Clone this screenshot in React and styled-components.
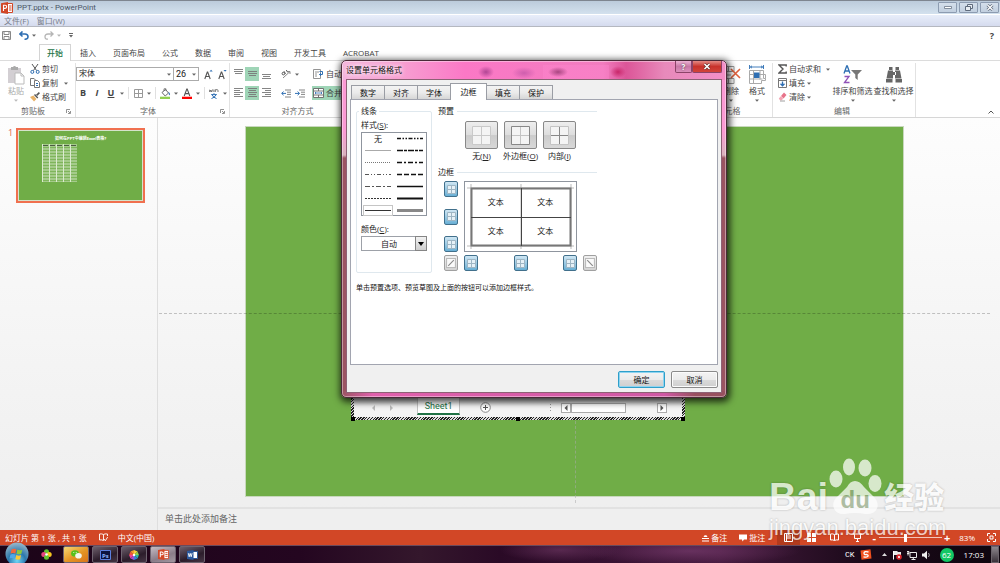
import React, { useState } from "react";
import styled, { createGlobalStyle, css } from "styled-components";

const GlobalStyle = createGlobalStyle`
  * {
    box-sizing: border-box;
  }
  body {
    margin: 0;
    overflow: hidden;
    font-family: "Open Sans", "Noto Sans CJK SC", sans-serif;
    font-size: 8px;
    line-height: 12px;
    color: #444;
  }
  button, select, input {
    font: inherit;
    color: inherit;
    margin: 0;
    padding: 0;
  }
  button {
    border: 0;
    background: none;
  }
  svg {
    display: block;
    flex: none;
  }
`;

const Screen = styled.div`
  position: relative;
  display: flex;
  flex-direction: column;
  min-height: 100vh;
  background: #fff;
`;

/* ---------- window chrome ---------- */

const TitleBar = styled.header`
  display: flex;
  align-items: center;
  gap: 4px;
  height: 14px;
  padding-left: 1px;
  border-top: 1px solid #7e8590;
  background: linear-gradient(#bccbdb, #d3e1ee);
  color: #4c5766;
`;

const TitleText = styled.h1`
  flex: 1;
  margin: 0;
  font-family: Roboto, sans-serif;
  font-size: 8px;
  font-weight: 400;
`;

const WindowButtons = styled.div`
  display: flex;
  gap: 2px;
  padding-right: 1px;
`;

const WindowButton = styled.button`
  display: flex;
  align-items: center;
  justify-content: center;
  width: 19px;
  height: 11px;
  border: 1px solid #8d9cb1;
  border-radius: 1px;
  background: linear-gradient(#d5dfeb, #c1cfdf);
`;

const MenuBar = styled.nav`
  display: flex;
  align-items: center;
  gap: 8px;
  height: 13px;
  padding-left: 4px;
  border-top: 1px solid #fff;
  border-bottom: 1px solid #b5b8c0;
  background: linear-gradient(#e8eefa, #d5dbee);
  color: #777c88;
`;

const QuickBar = styled.div`
  display: flex;
  align-items: center;
  height: 17px;
  padding: 0 6px 0 2px;
  gap: 8px;

  span {
    display: flex;
    align-items: center;
    gap: 3px;
  }
`;

const HelpButton = styled.button`
  margin-left: auto;
  font-size: 9px;
  font-weight: 700;
`;

/* ---------- ribbon ---------- */

const TabStrip = styled.div`
  display: flex;
  height: 17px;
  padding-left: 39px;
  border-bottom: 1px solid #dcdcdc;
`;

const RibbonTab = styled.button`
  height: 17px;
  padding: 0 7px;
  margin-right: 1px;
  white-space: nowrap;
  border: 1px solid transparent;
  border-bottom: 0;
  ${(props) =>
    props.$active &&
    css`
      color: #217346;
      font-weight: 500;
      border-color: #d4d4d4;
      background: #fff;
    `}
`;

const Ribbon = styled.div`
  display: flex;
  height: 57px;
  border-bottom: 1px solid #d6d6d6;
`;

const Group = styled.section`
  display: flex;
  flex-direction: column;
  flex: none;
  width: ${(props) => props.$width};
  margin-top: 2px;
  border-right: 1px solid #e2e2e2;
`;

const GroupBody = styled.div`
  display: flex;
  flex: 1;
  padding: ${(props) => props.$pad || "0"};
  justify-content: ${(props) => props.$justify || "flex-start"};
`;

const GroupLabel = styled.div`
  display: flex;
  align-items: center;
  height: 12px;
  padding-right: 4px;
  color: #666;

  span {
    flex: 1;
    text-align: center;
  }
`;

const BigButton = styled.button`
  display: flex;
  flex-direction: column;
  align-items: center;
  justify-content: flex-start;
  width: ${(props) => props.$width || "26px"};
  height: 40px;
  padding-top: 2px;
  white-space: nowrap;
  color: ${(props) => (props.disabled ? "#aaa" : "inherit")};

  span {
    height: 14px;
  }
`;

const CommandList = styled.div`
  display: flex;
  flex-direction: column;
  gap: 2px;
`;

const Command = styled.button`
  display: flex;
  align-items: center;
  gap: 2px;
  height: 12px;
  white-space: nowrap;
`;

const Spacer = styled.i`
  width: ${(props) => props.$width};
  flex: ${(props) => (props.$grow ? 1 : "none")};
`;

const ToolStack = styled.div`
  display: flex;
  flex-direction: column;
  gap: 5px;
`;

const ToolRow = styled.div`
  display: flex;
  align-items: center;
  height: 14px;
`;

const Tool = styled.button`
  display: flex;
  align-items: center;
  justify-content: center;
  width: ${(props) => props.$width || "14px"};
  height: 14px;
  background: ${(props) => (props.$on ? "#9fd5b7" : "none")};
  font-size: 9px;
  font-weight: 700;
`;

const WideTool = styled.button`
  display: flex;
  align-items: center;
  gap: 2px;
  height: 14px;
  padding-left: 1px;
  white-space: nowrap;
  background: ${(props) => (props.$on ? "#9fd5b7" : "none")};
`;

const Rule = styled.i`
  width: 1px;
  height: 12px;
  margin: 0 2px;
  background: #e0e0e0;
`;

const Combo = styled.div`
  position: relative;
  width: ${(props) => props.$width};
  margin-right: -1px;

  select {
    appearance: none;
    width: 100%;
    height: 14px;
    padding-left: 2px;
    border: 1px solid #ababab;
    border-radius: 0;
    background: #fff;
    color: #222;
    font-family: Roboto, "Noto Sans CJK SC", sans-serif;
    font-size: ${(props) => props.$size || "8px"};
  }

  svg {
    position: absolute;
    right: 3px;
    top: 6px;
    pointer-events: none;
  }
`;

const RibbonEnd = styled.div`
  display: flex;
  align-items: flex-end;
  justify-content: flex-end;
  width: 84px;
  padding: 0 6px 3px 0;
`;

/* ---------- work area ---------- */

const Work = styled.main`
  display: flex;
  flex: 1;
  background: linear-gradient(#fdfdfd, #eeeeee);
`;

const ThumbPane = styled.aside`
  display: flex;
  align-items: flex-start;
  gap: 3px;
  width: 158px;
  padding: 10px 0 0 8px;
  border-right: 1px solid #dedede;
  color: #e2664a;
  font-size: 9px;
  line-height: 10px;
`;

const Thumb = styled.div`
  width: 129px;
  height: 75px;
  padding-top: 6px;
  border: 2px solid #f0704f;
  outline: 1px solid #d5e3cb;
  outline-offset: -3px;
  background: #70ad47;
  color: #fff;
  font-size: 4px;
  font-weight: 700;
  line-height: 6px;
  text-align: center;
  font-family: Roboto, "Noto Sans CJK SC", sans-serif;

  svg {
    margin: 2px 0 0 24px;
  }
`;

const Editor = styled.div`
  display: flex;
  flex-direction: column;
  flex: 1;
`;

const Canvas = styled.div`
  position: relative;
  display: flex;
  flex: 1;
  padding: 8px 96px 10px 87px;

  &::before {
    content: "";
    position: absolute;
    z-index: 1;
    left: 1px;
    right: 10px;
    top: 50%;
    border-top: 1px dashed #00000038;
  }

  &::after {
    content: "";
    position: absolute;
    left: 417px;
    bottom: 4px;
    height: 82px;
    border-left: 1px dashed #aaaaaa88;
  }
`;

const Slide = styled.div`
  position: relative;
  flex: 1;
  border: 1px solid #c8d8bd;
  background: #70ad47;
`;

const Notes = styled.div`
  height: 23px;
  padding: 4px 7px;
  border-top: 2px solid #e2e2e2;
  background: #efefef;
  color: #666;
  font-size: 9px;
`;

/* embedded workbook, edited in place */
const Workbook = styled.div`
  position: absolute;
  left: 105px;
  bottom: 76px;
  display: flex;
  flex-direction: column;
  justify-content: flex-end;
  width: 334px;
  height: 44px;
  padding: 0 3px 3px;
  background: repeating-linear-gradient(135deg, #222 0 1px, #ddd 1px 2px);
`;

const Handle = styled.i`
  position: absolute;
  bottom: -1px;
  left: ${(props) => props.$left};
  width: 4px;
  height: 4px;
  margin-left: -2px;
  background: #000;
`;

const SheetBar = styled.div`
  display: flex;
  align-items: center;
  height: 20px;
  padding: 0 15px 0 18px;
  border-top: 1px solid #777;
  background: linear-gradient(#c9c9c9, #f4f4f4 8px);
`;

const SheetTab = styled.button`
  width: 44px;
  height: 17px;
  margin: 0 20px 2px 23px;
  border: 1px solid #c4c4c4;
  border-top: 0;
  border-bottom: 2px solid #217346;
  background: #fff;
  color: #217346;
  font-family: Roboto, sans-serif;
  font-size: 9px;
`;

const ScrollArrow = styled.button`
  display: flex;
  align-items: center;
  justify-content: center;
  width: 10px;
  height: 10px;
  border: 1px solid #ababab;
  background: #fff;
`;

const ScrollTrack = styled.div`
  display: flex;
  width: 108px;
  justify-content: space-between;

  i {
    width: 55px;
    height: 10px;
    margin: 0 auto 0 0;
    border: 1px solid #ababab;
    background: #fff;
  }
`;

/* ---------- format cells dialog ---------- */

const Dialog = styled.section`
  position: absolute;
  z-index: 2;
  left: 341px;
  top: 60px;
  display: flex;
  flex-direction: column;
  width: 386px;
  height: 338px;
  padding: 0 4px 4px;
  border: 1px solid #4a2a38;
  border-radius: 5px;
  background:
    radial-gradient(8px 6px at 144px 11px, #8d2c7caa, transparent),
    radial-gradient(12px 6px at 182px 12px, #c457a8cc, transparent),
    radial-gradient(10px 5px at 216px 11px, #8c3068bb, transparent),
    radial-gradient(8px 6px at 276px 11px, #c2185bcc, transparent),
    linear-gradient(#ff86cf66, #ff86cf66) 201px 4px / 66px 15px no-repeat,
    linear-gradient(90deg, #f4b4dc, #f7a0d2 15%, #fb78c6 32%, #f27cbf 68%, #dc5598 74%, #e88abb 84%, #f48fc8 100%) 0 0 / 100% 19px no-repeat,
    linear-gradient(90deg, #9b5462, #e060ac 8%, #cf58a4 84%, #98505f 92%) 0 100% / 100% 6px no-repeat,
    linear-gradient(#fb9ad4 70px, #d9b3bd 94px, #9b5462 97px);
  box-shadow: inset 0 0 0 1px #ffffff66, 1px 2px 7px 2px #000000bb;
  color: #222;
`;

const DialogTitle = styled.header`
  display: flex;
  align-items: flex-start;
  height: 18px;
  color: #111;

  h2 {
    flex: 1;
    margin: 3px 0 0;
    font-size: 8px;
    font-weight: 400;
    text-shadow: 0 0 5px #fff, 0 0 5px #fff;
  }
`;

const CaptionButton = styled.button`
  display: flex;
  align-items: center;
  justify-content: center;
  width: ${(props) => (props.$close ? "30px" : "17px")};
  height: 12px;
  border: 1px solid #8c4468;
  border-top: 0;
  border-radius: 0 0 2px 2px;
  background: ${(props) =>
    props.$close
      ? "linear-gradient(#e58a84, #c8322b 50%, #d2443a)"
      : "linear-gradient(#eeb2d4, #c878a6 50%, #dc90bc)"};
  color: #fff;
  font-weight: 700;
  line-height: 9px;
  text-shadow: 0 0 2px #333;
`;

const DialogBody = styled.div`
  display: flex;
  flex-direction: column;
  flex: 1;
  padding: 4px 3px;
  border: 1px solid #8d6175;
  background: #f0f0f0;
`;

const DialogTabs = styled.div`
  display: flex;
  align-items: flex-end;
  height: 15px;
  padding-left: 1px;
`;

const DialogTab = styled.button`
  width: 34px;
  height: ${(props) => (props.$active ? "17px" : "14px")};
  margin: 0 -1px ${(props) => (props.$active ? "-1px" : "0")} 0;
  z-index: ${(props) => (props.$active ? 1 : 0)};
  border: 1px solid #9a9da4;
  border-bottom: 0;
  background: ${(props) =>
    props.$active ? "#fff" : "linear-gradient(#f3f3f3, #ebebeb 50%, #d6d6d6)"};
  color: #111;

  ${(props) =>
    props.$active &&
    css`
      width: 37px;
    `}
`;

const DialogPanel = styled.div`
  display: flex;
  flex-direction: column;
  flex: 1;
  gap: 9px;
  padding: 5px;
  border: 1px solid #a2a5b0;
  background: #fff;
`;

const PanelColumns = styled.div`
  display: flex;
  gap: 6px;
`;

const LineBox = styled.fieldset`
  width: 76px;
  height: 168px;
  margin: 0;
  padding: 0 4px;
  border: 1px solid #dfe8ee;
  border-radius: 2px;

  legend {
    padding: 0 2px;
    margin-left: -2px;
  }
`;

const FieldLabel = styled.label`
  display: block;
  margin-top: ${(props) => props.$top || "2px"};
`;

const StyleList = styled.div`
  display: grid;
  grid-template-columns: 1fr 1fr;
  grid-auto-rows: 12px;
  width: 66px;
  height: 84px;
  margin-top: 1px;
  border: 1px solid #8f959e;
`;

const StyleItem = styled.button`
  display: flex;
  align-items: center;
  justify-content: center;
  height: 11px;
  margin: 0 1px;
  border: ${(props) => (props.$selected ? "1px solid #c5c5c5" : "0")};
`;

const ColorField = styled.div`
  position: relative;
  display: flex;
  width: 66px;
  height: 15px;
  margin-top: 1px;

  select {
    appearance: none;
    width: 100%;
    padding-left: 19px;
    border: 1px solid #9da1a8;
    border-radius: 0;
    background: #fff;
  }

  span {
    position: absolute;
    right: 0;
    top: 0;
    display: flex;
    align-items: center;
    justify-content: center;
    width: 12px;
    height: 15px;
    border: 1px solid #858585;
    background: linear-gradient(#f2f2f2, #cfcfcf);
    pointer-events: none;
  }
`;

const BorderSide = styled.div`
  width: 159px;
`;

const SectionTitle = styled.h3`
  display: flex;
  align-items: center;
  gap: 3px;
  margin: 0;
  font-size: 8px;
  font-weight: 400;

  &::after {
    content: "";
    flex: 1;
    height: 1px;
    background: #dfe8ee;
  }
`;

const Presets = styled.div`
  display: flex;
  gap: 6px;
  padding: 4px 0 4px 27px;
`;

const Preset = styled.button`
  display: flex;
  flex-direction: column;
  align-items: center;
  gap: 1px;
  width: 33px;
  white-space: nowrap;

  i {
    display: flex;
    align-items: center;
    justify-content: center;
    width: 33px;
    height: 28px;
    border: 1px solid #888;
    border-radius: 2px;
    background: linear-gradient(#eeeeee, #dddddd 50%, #cccccc 52%, #d8d8d8);
  }
`;

const BorderGrid = styled.div`
  display: grid;
  grid-template-columns: 14px 113px 14px;
  gap: 3px 6px;
  padding: 3px 0 0 6px;
`;

const SideButtons = styled.div`
  display: flex;
  flex-direction: ${(props) => (props.$row ? "row" : "column")};
  justify-content: space-between;
`;

const EdgeButton = styled.button`
  display: flex;
  align-items: center;
  justify-content: center;
  width: 14px;
  height: 16px;
  border: 1px solid ${(props) => (props.$on ? "#41708c" : "#a0a0a0")};
  border-radius: 2px;
  background: ${(props) =>
    props.$on
      ? "linear-gradient(#cfe6f3, #9ccbe5 50%, #68afd5)"
      : "linear-gradient(#f0f0f0, #d2d2d2)"};
`;

const Preview = styled.div`
  position: relative;
  grid-column: 2 / 4;
  width: 113px;
  height: 71px;
  padding: 6px;
  border: 1px solid #8f959e;

  svg {
    position: absolute;
    left: 0;
    top: 0;
  }
`;

const PreviewCells = styled.div`
  display: grid;
  grid-template-columns: 1fr 1fr;
  height: 57px;
  align-items: center;
  text-align: center;
`;

const Hint = styled.p`
  margin: 0;
  font-size: 7px;
  color: #111;
`;

const DialogActions = styled.footer`
  display: flex;
  justify-content: flex-end;
  gap: 6px;
  padding-top: 6px;
`;

const ActionButton = styled.button`
  width: 47px;
  height: 17px;
  border: 1px solid ${(props) => (props.$primary ? "#2e9fca" : "#8a8a8a")};
  border-radius: 2px;
  background: linear-gradient(#f3f3f3, #ebebeb 50%, #dadada 52%, #cfcfcf);
  box-shadow: inset 0 0 0 1px ${(props) => (props.$primary ? "#8fd4f0" : "#fbfbfb")};
  color: #111;
`;

/* ---------- bottom bars ---------- */

const StatusBar = styled.footer`
  display: flex;
  align-items: center;
  height: 15px;
  padding: 0 4px 0 5px;
  background: #d24726;
  color: #fff;
  white-space: nowrap;
`;

const StatusItem = styled.span`
  display: flex;
  align-items: center;
  gap: 2px;
  margin-right: ${(props) => props.$gap || "12px"};
`;

const StatusRight = styled.div`
  display: flex;
  align-items: center;
  margin-left: auto;
`;

const ViewButton = styled.button`
  display: flex;
  align-items: center;
  justify-content: center;
  width: 23px;
  height: 15px;
  background: ${(props) => (props.$on ? "#b23a1d" : "none")};
`;

const ZoomStep = styled.button`
  width: 10px;
  font-size: 11px;
  font-weight: 700;
`;

const ZoomRange = styled.input`
  appearance: none;
  width: 63px;
  height: 10px;
  background: linear-gradient(#f3c6ba, #f3c6ba) center / 100% 1px no-repeat;

  &::-webkit-slider-thumb {
    appearance: none;
    width: 3px;
    height: 8px;
    background: #fff;
  }
`;

const Taskbar = styled.nav`
  display: flex;
  align-items: center;
  gap: 3px;
  height: 18px;
  padding: 0 1px 0 5px;
  border-top: 1px solid #6b4a5c;
  background:
    radial-gradient(60px 12px at 560px 4px, #6b3560aa, transparent),
    radial-gradient(110px 14px at 690px 5px, #7a3d70aa, transparent),
    linear-gradient(90deg, #1c0418, #240620 30%, #34172c 42%, #2a0a26 50%, #451a3e 72%, #1c0a1a 86%, #0e050e);
  color: #fff;
`;

const StartOrb = styled.button`
  position: relative;
  top: -2px;
`;

const QuickLaunch = styled.button`
  margin: 0 8px 0 9px;
`;

const TaskButton = styled.button`
  display: flex;
  align-items: center;
  justify-content: center;
  width: 26px;
  height: 17px;
  border: 1px solid #6f6470;
  border-radius: 2px;
  background: ${(props) => props.$fill || "linear-gradient(160deg, #6d5f6c, #2c1d2b 60%, #453544)"};
`;

const Tray = styled.div`
  display: flex;
  align-items: center;
  margin-left: auto;
  gap: 5px;
  height: 17px;
`;

const ImeText = styled.span`
  font-family: "Liberation Mono", monospace;
  font-size: 8px;
`;

const BatteryBadge = styled.span`
  width: 14px;
  height: 14px;
  margin: 0 5px 0 4px;
  border-radius: 50%;
  background: #12c765;
  line-height: 14px;
  text-align: center;
`;

const ShowDesktop = styled.button`
  width: 8px;
  height: 17px;
  margin-left: 2px;
  border: 1px solid #6a626a;
  background: linear-gradient(#8d868d, #3a323a);
`;

/* ---------- watermark ---------- */

const Watermark = styled.div`
  position: absolute;
  z-index: 3;
  right: 53px;
  bottom: 22px;
  width: 178px;
  color: #fff;
  opacity: 0.72;
  font-family: "Liberation Sans", "Noto Sans CJK SC", sans-serif;
  text-shadow: 0 0 2px #00000066;
  pointer-events: none;
`;

const Brand = styled.div`
  display: flex;
  align-items: flex-end;
  height: 56px;
  font-size: 38px;
  font-weight: 700;
  line-height: 36px;

  b {
    font-size: 30px;
    line-height: 34px;
    white-space: nowrap;
  }
`;

const Paw = styled.span`
  position: relative;
  display: flex;
  justify-content: center;
  width: 54px;
  margin: 0 2px 0 0;

  em {
    position: absolute;
    bottom: 3px;
    color: #96ab86;
    font-size: 24px;
    font-style: normal;
    line-height: 24px;
    text-shadow: none;
  }
`;

const Address = styled.div`
  font-size: 22px;
  line-height: 26px;
`;

/* ---------- icons ---------- */

const Caret = ({ color = "#666" }) => (
  <svg width="4" height="3" viewBox="0 0 4 3">
    <path d="M0 0.5h4L2 2.7z" fill={color} />
  </svg>
);

const PptIcon = ({ size = 12 }) => (
  <svg width={size} height={size} viewBox="0 0 12 12">
    <path d="M6 1.5h5.5v9H6z" fill="#fff" stroke="#d24726" />
    <path d="M8 4h2.5M8 6h2.5M8 8h2.5" stroke="#d24726" />
    <path d="M0 1.2 7 0v12L0 10.8z" fill="#d24726" />
    <path d="M2.5 9V3.2h1.6a1.5 1.5 0 0 1 0 3.2H2.5" fill="none" stroke="#fff" strokeWidth="1.1" />
  </svg>
);

const PasteIcon = () => (
  <svg width="18" height="20" viewBox="0 0 18 20">
    <path d="M1 3h13v15H1z" fill="#d3cfd3" />
    <path d="M4 5V2h2a1.6 1.6 0 0 1 3 0h2v3z" fill="#aaa" />
    <path d="M8 8h6l3 3v8H8z" fill="#fff" stroke="#bbb" />
    <path d="M14 8v3h3" fill="none" stroke="#bbb" />
  </svg>
);

const CutIcon = () => (
  <svg width="10" height="10" viewBox="0 0 10 10" fill="none">
    <path d="m2 0 4.6 6.6M8 0 3.4 6.6" stroke="#555" />
    <circle cx="2.3" cy="7.9" r="1.5" stroke="#2f6fb3" />
    <circle cx="7.7" cy="7.9" r="1.5" stroke="#2f6fb3" />
  </svg>
);

const CopyIcon = () => (
  <svg width="10" height="10" viewBox="0 0 10 10" fill="#fff">
    <path d="M.5.5h3.6l1.4 1.6v5.4h-5z" stroke="#777" />
    <path d="M4.5 2.5h3l2 2v5h-5z" stroke="#777" />
    <path d="M6 5.5h2M6 7.5h2" stroke="#2f6fb3" />
  </svg>
);

const BrushIcon = () => (
  <svg width="10" height="10" viewBox="0 0 10 10">
    <path d="m0 5 3.5-1.5L6.5 7 4 9.5z" fill="#e8b36a" />
    <path d="m4 3 3.3 3.4 1-1L5 2z" fill="#555" />
    <path d="m6.6 3.4 2.8-2.8" stroke="#555" strokeWidth="1.6" />
  </svg>
);

const Launcher = () => (
  <svg width="5" height="5" viewBox="0 0 5 5" fill="none" stroke="#777">
    <path d="M.5 4V.5H4M2 2l2 2M4.5 2v2.5H2" strokeWidth=".8" />
  </svg>
);

const GrowFont = ({ down }) => (
  <svg width="9" height="11" viewBox="0 0 9 11" fill="none">
    <path d="m.8 10 2.5-7h.4l2.5 7M1.7 7.5h3.6" stroke="#555" strokeWidth="1.1" />
    <path d={down ? "M5.5 1h3.2L7.1 2.8z" : "M5.5 2.6h3.2L7.1.8z"} fill="#2f6fb3" />
  </svg>
);

const GridIcon = ({ size = 9, line = "#999", outer = line, inner = line, fill = "none" }) => (
  <svg width={size} height={size} viewBox={`0 0 ${size} ${size}`} fill={fill}>
    <path d={`M.5.5h${size - 1}v${size - 1}h-${size - 1}z`} stroke={outer} />
    <path d={`M${size / 2} 1v${size - 2}M1 ${size / 2}h${size - 2}`} stroke={inner} />
  </svg>
);

const BucketIcon = () => (
  <svg width="11" height="11" viewBox="0 0 11 11">
    <path d="m2 4.5 3.5-3 3 3.5-3.3 3z" fill="#fff" stroke="#666" />
    <path d="M4 3V.8h2V3" fill="none" stroke="#666" strokeWidth=".8" />
    <path d="M8.6 3.5q2 2 .9 4-1.3-1-.9-4" fill="#2f6fb3" />
    <path d="M0 8.7h10V11H0z" fill="#92d050" />
  </svg>
);

const FontColorIcon = () => (
  <svg width="10" height="11" viewBox="0 0 10 11">
    <path d="m2.2 8 2.6-7h.4l2.6 7M3.2 5.6h3.6" fill="none" stroke="#555" strokeWidth="1.1" />
    <path d="M0 8.7h10V11H0z" fill="#f00" />
  </svg>
);

const PinyinIcon = () => (
  <svg width="10" height="11" viewBox="0 0 10 11" fill="none">
    <path d="m0 1.5.9 2.5.9-2 .9 2 .8-2.5M4.9 1.5V4M6.3 4V1.7h2q.7 0 .7.8V4" stroke="#666" strokeWidth=".9" />
    <path d="M5 5.2v1M2.2 6.6h5.6M3 6.8q1.5 3 4.5 3.7M7 6.8q-1.5 3-4.5 3.7" stroke="#2f6fb3" />
  </svg>
);

const AlignIcon = ({ bars, top = 0 }) => (
  <svg width="9" height="10" viewBox="0 0 9 10" stroke="#777">
    {bars.map(([x1, x2], i) => (
      <path key={i} d={`M${x1} ${top + i * 2 + 0.5}H${x2}`} strokeWidth=".9" />
    ))}
  </svg>
);

const OrientIcon = () => (
  <svg width="10" height="10" viewBox="0 0 10 10" fill="none" stroke="#555">
    <path d="m2 9 7-6.5M9 5V2.5H6.5" stroke="#888" />
    <circle cx="2.4" cy="4.6" r="1.3" />
    <path d="m3 2.2 1.5 2.6M5.3 1l1.4 2.4" />
  </svg>
);

const IndentIcon = ({ right }) => (
  <svg width="10" height="9" viewBox="0 0 10 9" fill="none">
    <path d="M4 1h6M6 3.2h4M6 5.4h4M4 8h6" stroke="#777" strokeWidth=".9" />
    <path d={right ? "M0 4.4h4M2.6 2.6l2 1.8-2 1.8" : "M5 4.4H1M2.6 2.6.6 4.4l2 1.8"} stroke="#2f6fb3" />
  </svg>
);

const WrapIcon = () => (
  <svg width="11" height="10" viewBox="0 0 11 10" fill="none">
    <path d="M.5.5h7v9h-7zM2 3h4M2 5h2M2 7h2" stroke="#888" strokeWidth=".9" />
    <path d="M6.5 2.5h3v3h-3M8 4 6.5 5.5 8 7" stroke="#2f6fb3" />
  </svg>
);

const MergeIcon = () => (
  <svg width="11" height="10" viewBox="0 0 11 10" fill="#fff">
    <path d="M.5.5h10v9H.5zM.5 3h10M.5 7h10M5.5.5V3M5.5 7v2.5" stroke="#666" strokeWidth=".9" />
    <path d="M2 5h7M3 4 2 5l1 1M8 4l1 1-1 1" fill="none" stroke="#2f6fb3" strokeWidth=".8" />
  </svg>
);

const DeleteCellsIcon = () => (
  <svg width="19" height="20" viewBox="0 0 19 20" fill="none">
    <path d="M1 1.5h11v5H1zM1 13.5h11v5H1zM6.5 1.5v5M6.5 13.5v5M1 10h8" stroke="#999" />
    <path d="m9 4 9 9M18 4l-9 9" stroke="#e0603c" strokeWidth="1.6" />
  </svg>
);

const FormatCellsIcon = () => (
  <svg width="18" height="20" viewBox="0 0 18 20" fill="none">
    <path d="M2 2h14M1.5 0v4M15.5 0v4M4 .8 2.5 2 4 3.2M13 .8 14.500 2 13 3.2" stroke="#2f6fb3" strokeWidth=".9" />
    <path d="M1.500 5.500h14v8h2v2h-4v3H1.500zM1.500 9.500h16v4M1.500 14h13M5.500 5.500v13M12 5.500v9" stroke="#aaa" />
    <path d="M6 7.500h5.500V13H6z" fill="#2f6fb3" />
  </svg>
);

const SigmaIcon = () => (
  <svg width="9" height="10" viewBox="0 0 9 10">
    <path d="M8.200 2.400V1H1l4 4-4 4h7.200V7.400" fill="none" stroke="#555" strokeWidth="1.400" />
  </svg>
);

const FillIcon = () => (
  <svg width="9" height="10" viewBox="0 0 9 10">
    <path d="M.5.5h8v9h-8zM.5 2.500h8" fill="#fff" stroke="#777" />
    <path d="M4.500 3.500v4M2.500 5.800l2 2 2-2" fill="none" stroke="#2f6fb3" strokeWidth="1.300" />
  </svg>
);

const EraserIcon = () => (
  <svg width="9" height="10" viewBox="0 0 9 10">
    <path d="m3 4 3-3.500L8.500 3l-3 3.500z" fill="#e8738a" />
    <path d="m.8 6.500 2-2.200L5.200 6.800l-1.500 1.500H2z" fill="#f3a5b3" />
    <path d="M2 9h5" stroke="#888" strokeWidth=".8" />
  </svg>
);

const SortIcon = () => (
  <svg width="19" height="20" viewBox="0 0 19 20" fill="none">
    <path d="M1 8.500 3.700 1h.6L7 8.500M2 6h4" stroke="#2f6fb3" strokeWidth="1.300" />
    <path d="M1.500 11.500H6L1.500 17.500h5" stroke="#9052b8" strokeWidth="1.300" />
    <path d="M8 5h11l-4.300 4.500V15l-2.400-2V9.500z" fill="#777" />
  </svg>
);

const FindIcon = () => (
  <svg width="18" height="20" viewBox="0 0 18 20" fill="#666">
    <path d="M4 2h3.500v3H4zM10.500 2H14v3h-3.500zM3 5.500h5v8H1.500zM15 5.500h-5v8h6.500zM7 7h4v3H7zM1 14h6.500v3.500H1zM10.500 14H17v3.500h-6.500z" />
  </svg>
);

const Windows7Orb = () => (
  <svg width="24" height="22" viewBox="0 0 24 22">
    <defs>
      <radialGradient id="orb" cx="50%" cy="80%" r="75%">
        <stop offset="0" stopColor="#6fd6f5" />
        <stop offset=".5" stopColor="#2c77ad" />
        <stop offset="1" stopColor="#8fb2c8" />
      </radialGradient>
    </defs>
    <circle cx="12" cy="12" r="11.5" fill="url(#orb)" />
    <path d="M6.500 7.500q2.500-1.500 4.800-.2l-.9 4.200q-2.400-1.200-4.800 0z" fill="#f0683a" />
    <path d="M12.300 7.600q2.500 1.300 5 .1l-1 4.200q-2.400 1-4.800-.2z" fill="#8fc93a" />
    <path d="M5.400 12.600q2.400-1.200 4.800 0l-.9 4q-2.300-1.200-4.800-.1z" fill="#4fa8e8" />
    <path d="M11.300 13q2.400 1.200 4.800.1l-.9 4.200q-2.500 1-4.800-.2z" fill="#fbc934" />
  </svg>
);

const CloverIcon = () => (
  <svg width="11" height="11" viewBox="0 0 11 11">
    <circle cx="5.500" cy="2.800" r="2.500" fill="#63c52e" />
    <circle cx="2.800" cy="5.500" r="2.500" fill="#e6467d" />
    <circle cx="8.200" cy="5.500" r="2.500" fill="#f5c51f" />
    <circle cx="5.500" cy="8.200" r="2.500" fill="#63c52e" />
    <circle cx="5.500" cy="5.500" r="1.300" fill="#fff" />
  </svg>
);

const WechatIcon = () => (
  <svg width="11" height="9" viewBox="0 0 11 9">
    <ellipse cx="4" cy="3.400" rx="3.900" ry="3.200" fill="#57c11c" />
    <ellipse cx="7.500" cy="5.700" rx="3.300" ry="2.800" fill="#f4f8ee" />
    <circle cx="2.800" cy="2.600" r=".5" fill="#fff" />
    <circle cx="5.200" cy="2.600" r=".5" fill="#fff" />
  </svg>
);

const PhotoshopIcon = () => (
  <svg width="11" height="10" viewBox="0 0 11 10">
    <path d="M.5.5h10v9H.5z" fill="#0c1340" stroke="#5d7fe0" />
    <text x="2" y="7.500" fontSize="6" fontWeight="700" fill="#8fb4ff">Ps</text>
  </svg>
);

const wheelColors = ["#f7d33b", "#8fd14a", "#2fb6a5", "#3a7de0", "#a04fd0", "#f0419a", "#f0563a", "#f79a2f"];

const WheelIcon = () => (
  <svg width="10" height="10" viewBox="-5 -5 10 10">
    {wheelColors.map((color, i) => (
      <path key={color} d="M0 0 0-4.900 3.500-3.500z" fill={color} transform={`rotate(${i * 45})`} />
    ))}
    <circle r="1.200" fill="#fff" />
  </svg>
);

const WordIcon = () => (
  <svg width="11" height="10" viewBox="0 0 11 10">
    <path d="M5.500 1.500h5v7h-5z" fill="#fff" stroke="#2b579a" />
    <path d="M0 1 6.500 0v10L0 9z" fill="#2b579a" />
    <path d="m1.300 3.200.9 3.600 1-3.400 1 3.400.9-3.600" fill="none" stroke="#fff" strokeWidth=".9" />
  </svg>
);

const SogouIcon = () => (
  <svg width="12" height="11" viewBox="0 0 12 11">
    <path d="m.5 1.500 10-1.300 1 9.300-10 1.300z" fill="#f0501e" />
    <path d="M8.500 3Q4 2 4 4t2.300 1.400Q8.700 6 8 7.300T3.500 7.800" fill="none" stroke="#fff" strokeWidth="1.300" />
  </svg>
);

const FlagIcon = () => (
  <svg width="10" height="10" viewBox="0 0 10 10">
    <path d="M1.500 1v8.500" stroke="#fff" />
    <path d="M2 1h3l1 1h3v4H6L5 5H2z" fill="#e8e8e8" />
    <circle cx="7" cy="7" r="2.800" fill="#d8232a" />
    <path d="m6 6 2 2M8 6 6 8" stroke="#fff" strokeWidth=".8" />
  </svg>
);

const NetworkIcon = () => (
  <svg width="10" height="10" viewBox="0 0 10 10" fill="none" stroke="#e8e8e8">
    <path d="M3 2.500h6.500v5H3zM4.500 9.500h4M6.300 7.500v2M1 1v4.500M0 1.500h2v2H0" />
  </svg>
);

const SpeakerIcon = () => (
  <svg width="9" height="10" viewBox="0 0 9 10">
    <path d="M0 3.500h2L5 .8v8.400L2 6.500H0z" fill="#f0f0f0" />
    <path d="M6.500 3q1.600 2 0 4" fill="none" stroke="#ccc" strokeWidth=".8" />
  </svg>
);

const SlideTable = () => (
  <svg width="36" height="38" viewBox="0 0 36 38">
    <path d="M0 0h35v38H0z" fill="#a5cb8b" />
    {Array.from({ length: 12 }, (_, i) => (
      <path key={i} d={`M1 ${i * 3 + 3.5}h34`} stroke="#7fb55b" />
    ))}
    <path d="M1 1.500h34" stroke="#4c5d42" strokeDasharray="5 2" />
    <path d="M.5 0v38M7.500 0v38M14.500 0v38M21.500 0v38M28.500 0v38" stroke="#dcebd0" />
  </svg>
);

const lineStyles = [
  null,
  ["#111", 1.5, "4 1.500 1.500 1.500 1.500 1.500"],
  ["#aaa", 1, null],
  ["#111", 1.5, "6 1 3 1"],
  ["#777", 1, "1 1"],
  ["#111", 1.5, "5 2 2 2"],
  ["#555", 1, "4 2 1 2 1 2"],
  ["#111", 1.5, "5 2"],
  ["#555", 1, "5 2 2 2"],
  ["#111", 1.5, null],
  ["#333", 1, "2 1"],
  ["#111", 2, null],
  ["#333", 1, null],
  ["#888", 3, null],
];

const LineSample = ({ line }) => (
  <svg width="26" height="5" viewBox="0 0 26 5">
    <path d="M0 2.500h26" stroke={line[0]} strokeWidth={line[1]} strokeDasharray={line[2] || undefined} />
  </svg>
);

const Diagonal = ({ d }) => (
  <svg width="10" height="10" viewBox="0 0 9 9" fill="#fafafa">
    <path d="M.5.5h8v8h-8z" stroke="#bbb" />
    <path d={d} stroke="#888" />
  </svg>
);

/* ---------- page ---------- */

const ribbonTabs = ["开始", "插入", "页面布局", "公式", "数据", "审阅", "视图", "开发工具", "ACROBAT"];
const dialogTabs = ["数字", "对齐", "字体", "边框", "填充", "保护"];

const full = [0, 9];

function ClipboardGroup() {
  return (
    <Group $width="76px">
      <GroupBody $pad="0 0 0 3px">
        <BigButton disabled>
          <PasteIcon />
          <span>粘贴</span>
          <Caret color="#bbb" />
        </BigButton>
        <Spacer $width="1px" />
        <CommandList>
          <Command><CutIcon />剪切</Command>
          <Command><CopyIcon />复制<Spacer $width="2px" /><Caret /></Command>
          <Command><BrushIcon />格式刷</Command>
        </CommandList>
      </GroupBody>
      <GroupLabel><span>剪贴板</span><Launcher /></GroupLabel>
    </Group>
  );
}

function FontGroup() {
  return (
    <Group $width="154px">
      <GroupBody $pad="4px 0 0">
        <ToolStack>
          <ToolRow>
            <Combo $width="98px">
              <select aria-label="字体"><option>宋体</option></select>
              <Caret />
            </Combo>
            <Combo $width="26px" $size="9px">
              <select aria-label="字号"><option>26</option></select>
              <Caret />
            </Combo>
            <Spacer $width="3px" />
            <Tool aria-label="增大字号"><GrowFont /></Tool>
            <Tool aria-label="减小字号"><GrowFont down /></Tool>
          </ToolRow>
          <ToolRow>
            <Tool>B</Tool>
            <Tool><i>I</i></Tool>
            <Tool><u>U</u></Tool>
            <Tool $width="8px" aria-label="下划线选项"><Caret /></Tool>
            <Rule />
            <Tool aria-label="边框"><GridIcon /></Tool>
            <Tool $width="8px" aria-label="边框选项"><Caret /></Tool>
            <Rule />
            <Tool aria-label="填充颜色"><BucketIcon /></Tool>
            <Tool $width="8px" aria-label="填充选项"><Caret /></Tool>
            <Tool aria-label="字体颜色"><FontColorIcon /></Tool>
            <Tool $width="8px" aria-label="颜色选项"><Caret /></Tool>
            <Rule />
            <Tool aria-label="拼音"><PinyinIcon /></Tool>
            <Tool $width="8px" aria-label="拼音选项"><Caret /></Tool>
          </ToolRow>
        </ToolStack>
      </GroupBody>
      <GroupLabel><span>字体</span><Launcher /></GroupLabel>
    </Group>
  );
}

function AlignGroup() {
  return (
    <Group $width="140px">
      <GroupBody $pad="4px 0 0 1px">
        <ToolStack>
          <ToolRow>
            <Tool aria-label="顶端对齐"><AlignIcon bars={[full, full, [1, 8]]} /></Tool>
            <Tool $on aria-label="垂直居中"><AlignIcon top={2} bars={[full, full, [1, 8]]} /></Tool>
            <Tool aria-label="底端对齐"><AlignIcon top={5} bars={[full, [1, 8], full]} /></Tool>
            <Spacer $width="6px" />
            <Tool aria-label="方向"><OrientIcon /></Tool>
            <Tool $width="8px" aria-label="方向选项"><Caret /></Tool>
            <Spacer $width="11px" />
            <WideTool><WrapIcon />自动换行</WideTool>
          </ToolRow>
          <ToolRow>
            <Tool aria-label="左对齐"><AlignIcon bars={[full, [0, 6], full, [0, 6], full]} /></Tool>
            <Tool $on aria-label="居中"><AlignIcon bars={[full, [1, 8], full, [1, 8], full]} /></Tool>
            <Tool aria-label="右对齐"><AlignIcon bars={[full, [3, 9], full, [3, 9], full]} /></Tool>
            <Spacer $width="6px" />
            <Tool aria-label="减少缩进"><IndentIcon /></Tool>
            <Tool aria-label="增加缩进"><IndentIcon right /></Tool>
            <Spacer $width="5px" />
            <WideTool $on><MergeIcon />合并后居中</WideTool>
          </ToolRow>
        </ToolStack>
      </GroupBody>
      <GroupLabel><span>对齐方式</span></GroupLabel>
    </Group>
  );
}

function EditGroups() {
  return (
    <>
      <Group $width="84px">
        <GroupBody $justify="flex-end" $pad="0 2px 0 0">
          <BigButton><DeleteCellsIcon /><span>删除</span><Caret /></BigButton>
          <BigButton><FormatCellsIcon /><span>格式</span><Caret /></BigButton>
        </GroupBody>
        <GroupLabel><span>单元格</span></GroupLabel>
      </Group>
      <Group $width="143px">
        <GroupBody $pad="0 0 0 5px">
          <CommandList>
            <Command><SigmaIcon />自动求和<Spacer $width="1px" /><Caret /></Command>
            <Command><FillIcon />填充<Caret /></Command>
            <Command><EraserIcon />清除<Caret /></Command>
          </CommandList>
          <Spacer $width="2px" />
          <BigButton $width="41px"><SortIcon /><span>排序和筛选</span><Caret /></BigButton>
          <BigButton $width="41px"><FindIcon /><span>查找和选择</span><Caret /></BigButton>
        </GroupBody>
        <GroupLabel><span>编辑</span></GroupLabel>
      </Group>
    </>
  );
}

function FormatCellsDialog() {
  const [tab, setTab] = useState("边框");
  const [lineIndex, setLineIndex] = useState(12);

  const edge = (name) => (
    <EdgeButton $on aria-label={name}>
      <GridIcon line="#9fb6c4" fill="#e6f1f7" />
    </EdgeButton>
  );

  return (
    <Dialog role="dialog" aria-label="设置单元格格式">
      <DialogTitle>
        <h2>设置单元格格式</h2>
        <CaptionButton>?</CaptionButton>
        <CaptionButton $close aria-label="关闭">
          <svg width="8" height="7" viewBox="0 0 8 7">
            <path d="m1.500 1 5 5M6.500 1l-5 5" stroke="#5b2a2a" strokeWidth="2.800" />
            <path d="m1.500 1 5 5M6.500 1l-5 5" stroke="#fff" strokeWidth="1.600" />
          </svg>
        </CaptionButton>
      </DialogTitle>
      <DialogBody>
        <DialogTabs>
          {dialogTabs.map((name) => (
            <DialogTab key={name} $active={name === tab} onClick={() => setTab(name)}>
              {name}
            </DialogTab>
          ))}
        </DialogTabs>
        <DialogPanel>
          <PanelColumns>
            <LineBox>
              <legend>线条</legend>
              <FieldLabel as="div">样式(<u>S</u>):</FieldLabel>
              <StyleList>
                {lineStyles.map((line, i) => (
                  <StyleItem
                    key={i}
                    $selected={i === lineIndex}
                    aria-label={line ? `线条 ${i}` : undefined}
                    onClick={() => setLineIndex(i)}
                  >
                    {line ? <LineSample line={line} /> : "无"}
                  </StyleItem>
                ))}
              </StyleList>
              <FieldLabel $top="7px" htmlFor="line-color">颜色(<u>C</u>):</FieldLabel>
              <ColorField>
                <select id="line-color"><option>自动</option></select>
                <span>
                  <svg width="6" height="4" viewBox="0 0 6 4"><path d="M0 0h6L3 4z" fill="#000" /></svg>
                </span>
              </ColorField>
            </LineBox>
            <BorderSide>
              <SectionTitle>预置</SectionTitle>
              <Presets>
                <Preset>
                  <i><GridIcon size={19} line="#c9c9c9" fill="#f4f4f4" /></i>
                  <span>无(<u>N</u>)</span>
                </Preset>
                <Preset>
                  <i><GridIcon size={19} outer="#888" inner="#c4c4c4" fill="#f4f4f4" /></i>
                  <span>外边框(<u>O</u>)</span>
                </Preset>
                <Preset>
                  <i><GridIcon size={19} outer="#c4c4c4" inner="#888" fill="#f4f4f4" /></i>
                  <span>内部(<u>I</u>)</span>
                </Preset>
              </Presets>
              <SectionTitle>边框</SectionTitle>
              <BorderGrid>
                <SideButtons>
                  {edge("上边框")}
                  {edge("水平内框")}
                  {edge("下边框")}
                </SideButtons>
                <Preview>
                  <svg width="111" height="69" viewBox="0 0 111 69" fill="none">
                    <path d="M2 6h107M2 64h107M6 2v65M106 2v65M56 2v65" stroke="#bbb" />
                    <path d="M6.500 6.500h99v57h-99z" stroke="#777" strokeWidth="2" />
                    <path d="M56.500 6v58M6 35.500h100" stroke="#444" />
                  </svg>
                  <PreviewCells>
                    <span>文本</span>
                    <span>文本</span>
                    <span>文本</span>
                    <span>文本</span>
                  </PreviewCells>
                </Preview>
                <EdgeButton aria-label="左斜线"><Diagonal d="m2 7 5-5" /></EdgeButton>
                <SideButtons $row>
                  {edge("左边框")}
                  {edge("垂直内框")}
                  {edge("右边框")}
                </SideButtons>
                <EdgeButton aria-label="右斜线"><Diagonal d="m2 2 5 5" /></EdgeButton>
              </BorderGrid>
            </BorderSide>
          </PanelColumns>
          <Hint>单击预置选项、预览草图及上面的按钮可以添加边框样式。</Hint>
        </DialogPanel>
        <DialogActions>
          <ActionButton $primary>确定</ActionButton>
          <ActionButton>取消</ActionButton>
        </DialogActions>
      </DialogBody>
    </Dialog>
  );
}

function EmbeddedSheet() {
  return (
    <Workbook>
      <SheetBar>
        <svg width="22" height="6" viewBox="0 0 22 6" fill="#bbb">
          <path d="M3 0v6L0 3zM18 0v6l3-3z" />
        </svg>
        <SheetTab>Sheet1</SheetTab>
        <svg width="11" height="11" viewBox="0 0 11 11" fill="#fff" stroke="#888">
          <circle cx="5.500" cy="5.500" r="4.800" />
          <path d="M5.500 3v5M3 5.500h5" stroke="#555" />
        </svg>
        <Spacer $width="58px" />
        <svg width="3" height="8" viewBox="0 0 3 8" fill="#999">
          <path d="M1 0h1v1H1zM1 3h1v1H1zM1 6h1v1H1z" />
        </svg>
        <Spacer $width="9px" />
        <ScrollTrack>
          <ScrollArrow aria-label="向左滚动">
            <svg width="4" height="6" viewBox="0 0 4 6"><path d="M3.500 0v6L.5 3z" fill="#555" /></svg>
          </ScrollArrow>
          <i />
          <ScrollArrow aria-label="向右滚动">
            <svg width="4" height="6" viewBox="0 0 4 6"><path d="M.5 0v6l3-3z" fill="#555" /></svg>
          </ScrollArrow>
        </ScrollTrack>
      </SheetBar>
      <Handle $left="2px" />
      <Handle $left="50%" />
      <Handle $left="332px" />
    </Workbook>
  );
}

export default function App() {
  const [ribbonTab, setRibbonTab] = useState("开始");
  const [zoom, setZoom] = useState(42);

  return (
    <Screen>
      <GlobalStyle />
      <TitleBar>
        <PptIcon />
        <TitleText>PPT.pptx - PowerPoint</TitleText>
        <WindowButtons>
          <WindowButton aria-label="最小化">
            <svg width="8" height="5" viewBox="0 0 8 5"><path d="M.5 1.500h7v2h-7z" fill="#fff" stroke="#6b7788" strokeWidth=".8" /></svg>
          </WindowButton>
          <WindowButton aria-label="还原">
            <svg width="8" height="7" viewBox="0 0 8 7" fill="#e8edf3" stroke="#5f6b7c">
              <path d="M2.500.5h5v4h-5z" />
              <path d="M.5 2.500h5v4h-5z" />
            </svg>
          </WindowButton>
          <WindowButton aria-label="关闭">
            <svg width="8" height="7" viewBox="0 0 8 7">
              <path d="m1.500 1 5 5M6.500 1l-5 5" stroke="#5f6b7c" strokeWidth="2.800" />
              <path d="m1.500 1 5 5M6.500 1l-5 5" stroke="#fff" strokeWidth="1.300" />
            </svg>
          </WindowButton>
        </WindowButtons>
      </TitleBar>
      <MenuBar>
        <span>文件(F)</span>
        <span>窗口(W)</span>
      </MenuBar>
      <QuickBar>
        <svg width="9" height="9" viewBox="0 0 9 9" fill="none" stroke="#888">
          <path d="M.5.5h8v8h-8zM2 .5v3h5v-3M2 8.500v-3h5v3" />
        </svg>
        <span>
          <svg width="10" height="9" viewBox="0 0 10 9" fill="none" stroke="#2f6fb3" strokeWidth="1.600">
            <path d="M3.500.5.900 3l2.600 2.500M1 3h5q3 0 3 2.700T5.500 8.200" />
          </svg>
          <Caret />
        </span>
        <span>
          <svg width="10" height="9" viewBox="0 0 10 9" fill="none" stroke="#b5b5b5" strokeWidth="1.300">
            <path d="m6.500.5 2.600 2.500-2.600 2.500M9 3H4Q1 3 1 5.700t3 2.500" />
          </svg>
          <Caret color="#b5b5b5" />
        </span>
        <svg width="4" height="5" viewBox="0 0 4 5" fill="#666">
          <path d="M0 0h4v1H0zM0 2h4L2 4.500z" />
        </svg>
        <HelpButton>?</HelpButton>
      </QuickBar>
      <TabStrip>
        {ribbonTabs.map((name) => (
          <RibbonTab key={name} $active={name === ribbonTab} onClick={() => setRibbonTab(name)}>
            {name}
          </RibbonTab>
        ))}
      </TabStrip>
      <Ribbon>
        <ClipboardGroup />
        <FontGroup />
        <AlignGroup />
        <Spacer $grow />
        <EditGroups />
        <RibbonEnd>
          <button aria-label="折叠功能区">
            <svg width="6" height="4" viewBox="0 0 6 4" fill="none" stroke="#555">
              <path d="m.5 3.500 2.500-2.500 2.500 2.500" />
            </svg>
          </button>
        </RibbonEnd>
      </Ribbon>
      <Work>
        <ThumbPane>
          <span>1</span>
          <Thumb>
            如何在PPT中编辑Excel表格?
            <SlideTable />
          </Thumb>
        </ThumbPane>
        <Editor>
          <Canvas>
            <Slide>
              <EmbeddedSheet />
            </Slide>
          </Canvas>
          <Notes>单击此处添加备注</Notes>
        </Editor>
      </Work>
      <StatusBar>
        <StatusItem>幻灯片 第 1 张 , 共 1 张</StatusItem>
        <StatusItem $gap="10px">
          <svg width="9" height="9" viewBox="0 0 9 9" fill="none" stroke="#fff">
            <path d="M4.500 1.500q-2-1-4-.5v6q2-.5 4 .5zM4.500 1.500q1.500-1 4-.5v2M5 6l1.300 1.800L8.700 4" strokeWidth=".9" />
          </svg>
        </StatusItem>
        <StatusItem>中文(中国)</StatusItem>
        <StatusRight>
          <StatusItem>
            <svg width="7" height="8" viewBox="0 0 7 8" fill="none" stroke="#fff">
              <path d="M0 4.500h7M0 7h7M2 2.500 3.500 1 5 2.500z" />
            </svg>
            备注
          </StatusItem>
          <StatusItem>
            <svg width="8" height="8" viewBox="0 0 8 8" fill="#fff">
              <path d="M0 .5h8v5H5L3.500 7.500 3 5.500H0z" />
            </svg>
            批注
          </StatusItem>
          <ViewButton $on aria-label="普通视图">
            <svg width="9" height="9" viewBox="0 0 9 9" fill="none" stroke="#fff"><path d="M.5.5h8v8h-8zM2 3h5M2 5h5M2.500.5v8" /></svg>
          </ViewButton>
          <ViewButton aria-label="幻灯片浏览">
            <svg width="9" height="9" viewBox="0 0 9 9" fill="#fff"><path d="M0 0h4v4H0zM5 0h4v4H5zM0 5h4v4H0zM5 5h4v4H5z" /></svg>
          </ViewButton>
          <ViewButton aria-label="阅读视图">
            <svg width="9" height="9" viewBox="0 0 9 9" fill="none" stroke="#fff"><path d="M4.500 1.500q-2-1-4-.5v6q2-.5 4 .5 2-1 4-.5v-6q-2-.5-4 .5zv6" /></svg>
          </ViewButton>
          <ViewButton aria-label="幻灯片放映">
            <svg width="9" height="9" viewBox="0 0 9 9" fill="none" stroke="#fff"><path d="M0 1h9M1.500 1v4.500h6V1M4.500 5.500V8M3 8.500h3" /></svg>
          </ViewButton>
          <ZoomStep>-</ZoomStep>
          <ZoomRange type="range" aria-label="缩放" value={zoom} onChange={(e) => setZoom(e.target.value)} />
          <ZoomStep>+</ZoomStep>
          <Spacer $width="7px" />
          <StatusItem>83%</StatusItem>
          <svg width="9" height="9" viewBox="0 0 9 9" fill="none" stroke="#fff">
            <path d="M.5 3V.5H3M6 .5h2.500V3M8.500 6v2.500H6M3 8.500H.5V6M3 3h3v3H3z" />
          </svg>
        </StatusRight>
      </StatusBar>
      <Taskbar>
        <StartOrb aria-label="开始"><Windows7Orb /></StartOrb>
        <QuickLaunch aria-label="快速启动"><CloverIcon /></QuickLaunch>
        <TaskButton $fill="linear-gradient(150deg, #f5d873, #e39424 55%, #d9741a)" aria-label="微信"><WechatIcon /></TaskButton>
        <TaskButton aria-label="Photoshop"><PhotoshopIcon /></TaskButton>
        <TaskButton aria-label="取色"><WheelIcon /></TaskButton>
        <TaskButton $fill="linear-gradient(160deg, #c5bcc4, #8a7c88 60%, #a398a1)" aria-label="PowerPoint"><PptIcon size={11} /></TaskButton>
        <TaskButton aria-label="Word"><WordIcon /></TaskButton>
        <Tray>
          <ImeText>CK</ImeText>
          <SogouIcon />
          <Spacer $width="0px" />
          <svg width="5" height="3" viewBox="0 0 5 3"><path d="M2.500 0 5 3H0z" fill="#ddd" /></svg>
          <FlagIcon />
          <NetworkIcon />
          <SpeakerIcon />
          <BatteryBadge>62</BatteryBadge>
          <span>17:03</span>
          <ShowDesktop aria-label="显示桌面" />
        </Tray>
      </Taskbar>
      <FormatCellsDialog />
      <Watermark>
        <Brand>
          Bai
          <Paw>
            <svg width="54" height="58" viewBox="0 0 54 58" fill="#fff">
              <ellipse cx="8" cy="22" rx="6.500" ry="8.500" />
              <ellipse cx="21" cy="10" rx="6" ry="8.500" />
              <ellipse cx="37" cy="11" rx="6.500" ry="8.500" />
              <ellipse cx="47" cy="26.500" rx="6.500" ry="8.500" />
              <path d="M27 24q-5 0-8 6l-9 9q-6 5-4.500 11 2 7.500 11 7 10.500-2 21 0 10 .5 12-7 1-6-4.500-11l-9-9q-4-6-9-6z" />
            </svg>
            <em>du</em>
          </Paw>
          <b>经验</b>
        </Brand>
        <Address>jingyan.baidu.com</Address>
      </Watermark>
    </Screen>
  );
}
